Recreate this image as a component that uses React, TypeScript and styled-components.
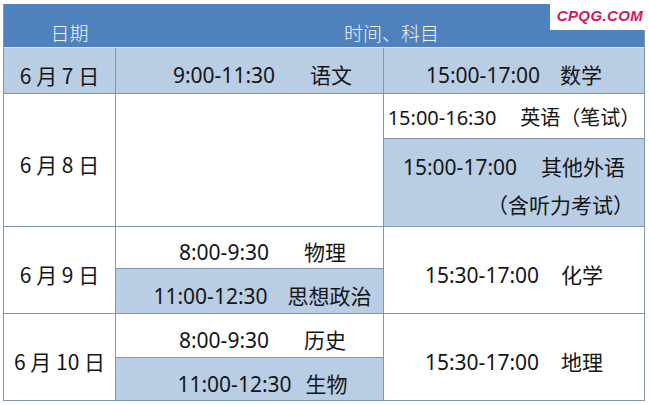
import React from 'react';
import styled, { createGlobalStyle } from 'styled-components';

const LINE = '#8196ad';
const HEAD = '#4f81bd';
const TINT = '#b9cde5';

const GlobalStyle = createGlobalStyle`
	html,
	body {
		margin: 0;
		padding: 0;
		background: #fff;
	}
	body {
		font-family: 'Noto Sans', 'Noto Sans CJK SC', sans-serif;
		color: #151515;
	}
`;

const Page = styled.div`
	position: relative;
	width: 650px;
	height: 405px;
	padding: 4px 5px 0 3px;
	box-sizing: border-box;
	background: #fff;
	overflow: hidden;
`;

const Table = styled.div`
	display: flex;
	flex-direction: column;
	border: 1px solid ${LINE};
	border-top: none;
`;

const HeadRow = styled.div`
	display: grid;
	grid-template-columns: 111px 1fr;
	height: 43px;
	background: ${HEAD};
`;

const HeadCell = styled.div<{ $indent: number }>`
	display: flex;
	align-items: flex-end;
	justify-content: center;
	padding: 0 0 5px ${(p) => p.$indent}px;
	color: #eef3fa;
	font-family: 'Noto Sans CJK SC', sans-serif;
	font-size: 19px;
	font-weight: 300;
	line-height: 1;
`;

const Row = styled.div<{ $height: number; $line?: string; $tint?: boolean }>`
	display: grid;
	grid-template-columns: 111px 268px 1fr;
	height: ${(p) => p.$height}px;
	box-sizing: border-box;
	border-top: 1px solid ${(p) => p.$line ?? LINE};
	background: ${(p) => (p.$tint ? TINT : '#fff')};
`;

const Column = styled.div`
	display: flex;
	flex-direction: column;
	min-height: 0;
	& + & {
		border-left: 1px solid ${LINE};
	}
`;

const Slot = styled.div<{ $h?: number; $tint?: boolean; $indent?: number; $size?: number; $drop?: number }>`
	flex: ${(p) => (p.$h ? `0 0 ${p.$h}px` : '1 1 0')};
	box-sizing: border-box;
	display: flex;
	flex-direction: column;
	align-items: center;
	justify-content: center;
	padding: ${(p) => p.$drop ?? 10}px 0 0 ${(p) => p.$indent ?? 0}px;
	background: ${(p) => (p.$tint ? TINT : 'transparent')};
	font-size: ${(p) => p.$size ?? 21}px;
	line-height: 1.2;
	white-space: nowrap;
	& + & {
		border-top: 1px solid ${LINE};
	}
`;

const Entry = styled.div<{ $gap: number }>`
	display: flex;
	align-items: baseline;
	gap: ${(p) => p.$gap}px;
`;

const Subject = styled.span`
	font-family: 'Noto Sans CJK SC', sans-serif;
`;

const Note = styled.div`
	align-self: flex-end;
	margin: 12px 10px 0 0;
	font-family: 'Noto Sans CJK SC', sans-serif;
`;

const Stamp = styled.div`
	position: absolute;
	top: 0;
	right: 0;
	width: 100px;
	height: 30px;
	display: flex;
	align-items: center;
	justify-content: center;
	background: #fff;
	color: #d6175b;
	font-family: 'Liberation Sans', Arial, sans-serif;
	font-size: 15px;
	font-style: italic;
	font-weight: bold;
	letter-spacing: 0.4px;
`;

const Day = ({ text }: { text: string }) => (
	<Slot>
		<Subject>{text}</Subject>
	</Slot>
);

const Exam = ({ time, name, gap }: { time: string; name: string; gap: number }) => (
	<Entry $gap={gap}>
		<span>{time}</span>
		<Subject>{name}</Subject>
	</Entry>
);

const App = () => (
	<Page>
		<GlobalStyle />
		<Table>
			<HeadRow>
				<HeadCell $indent={20}>日期</HeadCell>
				<HeadCell $indent={24}>时间、科目</HeadCell>
			</HeadRow>

			<Row $height={46} $line='#dbe5f1' $tint>
				<Column>
					<Day text='6 月 7 日' />
				</Column>
				<Column>
					<Slot $indent={26}>
						<Exam time='9:00-11:30' name='语文' gap={35} />
					</Slot>
				</Column>
				<Column>
					<Slot>
						<Exam time='15:00-17:00' name='数学' gap={20} />
					</Slot>
				</Column>
			</Row>

			<Row $height={133}>
				<Column>
					<Day text='6 月 8 日' />
				</Column>
				<Column />
				<Column>
					<Slot $h={44} $size={20} $drop={3}>
						<Exam time='15:00-16:30' name='英语（笔试）' gap={24} />
					</Slot>
					<Slot $tint $drop={6}>
						<Exam time='15:00-17:00' name='其他外语' gap={24} />
						<Note>（含听力考试）</Note>
					</Slot>
				</Column>
			</Row>

			<Row $height={87}>
				<Column>
					<Day text='6 月 9 日' />
				</Column>
				<Column>
					<Slot $h={41} $indent={26}>
						<Exam time='8:00-9:30' name='物理' gap={35} />
					</Slot>
					<Slot $tint $indent={26}>
						<Exam time='11:00-12:30' name='思想政治' gap={20} />
					</Slot>
				</Column>
				<Column>
					<Slot>
						<Exam time='15:30-17:00' name='化学' gap={22} />
					</Slot>
				</Column>
			</Row>

			<Row $height={87}>
				<Column>
					<Day text='6 月 10 日' />
				</Column>
				<Column>
					<Slot $h={43} $indent={26}>
						<Exam time='8:00-9:30' name='历史' gap={35} />
					</Slot>
					<Slot $tint $indent={26}>
						<Exam time='11:00-12:30' name='生物' gap={14} />
					</Slot>
				</Column>
				<Column>
					<Slot>
						<Exam time='15:30-17:00' name='地理' gap={22} />
					</Slot>
				</Column>
			</Row>
		</Table>
		<Stamp>CPQG.COM</Stamp>
	</Page>
);

export default App;
